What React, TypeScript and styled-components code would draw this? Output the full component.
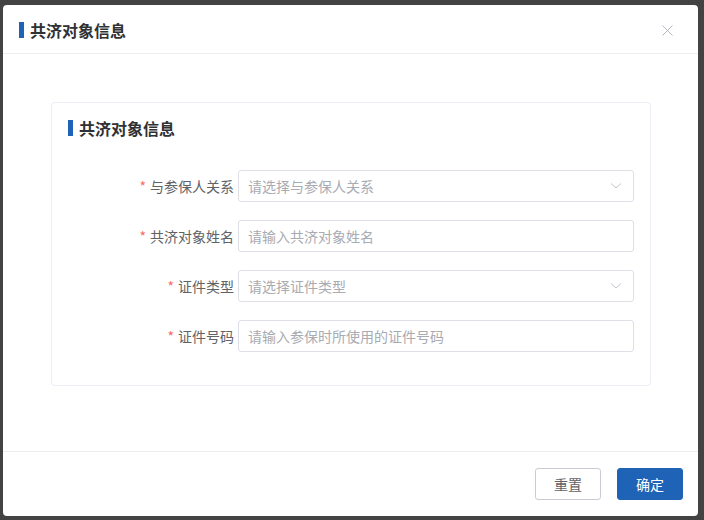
import React from "react";
import styled, { createGlobalStyle } from "styled-components";

const Global = createGlobalStyle`
  html, body { margin: 0; padding: 0; }
  body {
    background: #434343;
    font-family: "Noto Sans CJK SC", "Noto Sans", sans-serif;
    width: 704px;
    height: 520px;
    overflow: hidden;
  }
  * { box-sizing: border-box; }
`;

const Page = styled.div`
  padding: 5px 6px 4px 3px;
  height: 520px;
`;

const Modal = styled.div`
  background: #fff;
  border-radius: 4px;
  height: 511px;
  display: flex;
  flex-direction: column;
`;

const Header = styled.div`
  height: 49px;
  flex: none;
  display: flex;
  align-items: center;
  justify-content: space-between;
  padding: 2px 24px 0 16px;
  border-bottom: 1px solid #eeeeee;
`;

const Title = styled.div<{ $size?: number }>`
  display: flex;
  align-items: center;
  font-size: ${(p) => p.$size ?? 16}px;
  font-weight: 700;
  color: #303133;
  line-height: 20px;
  &::before {
    content: "";
    display: block;
    width: 5px;
    height: 16px;
    background: #1e63b6;
    margin-right: 6px;
  }
`;

const Close = styled.button`
  border: none;
  background: none;
  padding: 0;
  width: 14px;
  height: 14px;
  display: flex;
  align-items: center;
  justify-content: center;
  cursor: pointer;
`;

const Body = styled.div`
  flex: 1;
  padding: 48px 47px 0 48px;
`;

const Card = styled.div`
  border: 1px solid #ebeef5;
  border-radius: 4px;
  height: 284px;
  padding: 15px 16px 0 16px;
`;

const CardTitleWrap = styled.div`
  height: 19px;
  display: flex;
  align-items: center;
  margin-bottom: 33px;
`;

const Form = styled.div`
  display: flex;
  flex-direction: column;
  gap: 18px;
`;

const Row = styled.div`
  display: grid;
  grid-template-columns: 166px 1fr;
  column-gap: 4px;
  align-items: center;
`;

const Label = styled.label`
  text-align: right;
  font-size: 14px;
  color: #606266;
  line-height: 32px;
`;

const Star = styled.span`
  color: #f56c6c;
  margin-right: 4px;
`;

const Field = styled.div`
  position: relative;
  height: 32px;
  border: 1px solid #dcdfe6;
  border-radius: 3px;
  display: flex;
  align-items: center;
  padding: 0 30px 0 9px;
  font-size: 14px;
  color: #a8abb2;
`;

const Arrow = styled.span`
  position: absolute;
  right: 11px;
  top: 50%;
  transform: translateY(-50%);
  display: flex;
`;

const Footer = styled.div`
  flex: none;
  border-top: 1px solid #eeeeee;
  height: 65px;
  display: flex;
  align-items: center;
  justify-content: flex-end;
  gap: 16px;
  padding: 0 15px 0 0;
`;

const Button = styled.button<{ $primary?: boolean }>`
  width: 66px;
  height: 32px;
  border-radius: 3px;
  font-family: inherit;
  font-size: 14px;
  border: 1px solid ${(p) => (p.$primary ? "#1e63b6" : "#c9ccd2")};
  background: ${(p) => (p.$primary ? "#1e63b6" : "#fff")};
  color: ${(p) => (p.$primary ? "#fff" : "#606266")};
  cursor: pointer;
`;

const Chevron = () => (
  <svg width="12" height="8" viewBox="0 0 12 8" fill="none">
    <path d="M1 1.5 L6 6 L11 1.5" stroke="#c0c4cc" strokeWidth="1" />
  </svg>
);

const fields = [
  { label: "与参保人关系", placeholder: "请选择与参保人关系", select: true },
  { label: "共济对象姓名", placeholder: "请输入共济对象姓名", select: false },
  { label: "证件类型", placeholder: "请选择证件类型", select: true },
  { label: "证件号码", placeholder: "请输入参保时所使用的证件号码", select: false },
];

export default function App() {
  return (
    <>
      <Global />
      <Page>
        <Modal>
          <Header>
            <Title>共济对象信息</Title>
            <Close aria-label="close">
              <svg width="11" height="11" viewBox="0 0 11 11">
                <path d="M0.5 0.5 L10.5 10.5 M10.5 0.5 L0.5 10.5" stroke="#b4b7bd" strokeWidth="1" />
              </svg>
            </Close>
          </Header>
          <Body>
            <Card>
              <CardTitleWrap>
                <Title>共济对象信息</Title>
              </CardTitleWrap>
              <Form>
                {fields.map((f) => (
                  <Row key={f.label}>
                    <Label>
                      <Star>*</Star>
                      {f.label}
                    </Label>
                    <Field>
                      {f.placeholder}
                      {f.select && (
                        <Arrow>
                          <Chevron />
                        </Arrow>
                      )}
                    </Field>
                  </Row>
                ))}
              </Form>
            </Card>
          </Body>
          <Footer>
            <Button>重置</Button>
            <Button $primary>确定</Button>
          </Footer>
        </Modal>
      </Page>
    </>
  );
}
